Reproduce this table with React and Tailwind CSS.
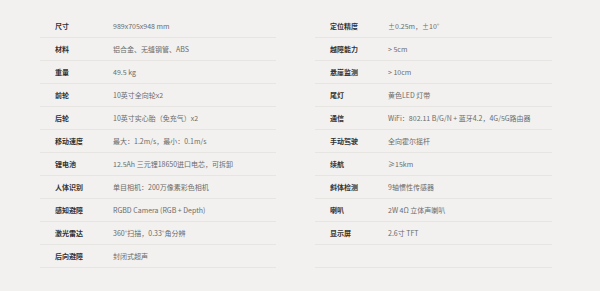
const LEFT = [
  ['尺寸', '989x705x948 mm'],
  ['材料', '铝合金、无缝钢管、ABS'],
  ['重量', '49.5 kg'],
  ['前轮', '10英寸全向轮x2'],
  ['后轮', '10英寸实心胎（免充气）x2'],
  ['移动速度', '最大：1.2m/s，最小：0.1m/s'],
  ['锂电池', '12.5Ah 三元锂18650进口电芯，可拆卸'],
  ['人体识别', '单目相机：200万像素彩色相机'],
  ['感知避障', 'RGBD Camera (RGB + Depth)'],
  ['激光雷达', '360°扫描，0.33°角分辨'],
  ['后向避障', '封闭式超声'],
];

const RIGHT = [
  ['定位精度', '±0.25m，±10°'],
  ['越障能力', '> 5cm'],
  ['悬崖监测', '> 10cm'],
  ['尾灯', '黄色LED 灯带'],
  ['通信', 'WiFi：802.11 B/G/N + 蓝牙4.2，4G/5G路由器'],
  ['手动驾驶', '全向霍尔摇杆'],
  ['续航', '≥15km'],
  ['斜体检测', '9轴惯性传感器'],
  ['喇叭', '2W 4Ω 立体声喇叭'],
  ['显示屏', '2.6寸 TFT'],
  ['', ''],
];

const SpecTable = ({ rows, width }) => (
  <div className={width}>
    {rows.map(([label, value], i) => (
      <div key={i} className="flex items-center h-[23px] border-b border-[#e6e5e2] pl-[15px]">
        <span className="w-[58px] shrink-0 text-[7px] font-bold text-[#333]">{label}</span>
        <span className="text-[7px] text-[#6b6b6b] whitespace-nowrap">{value}</span>
      </div>
    ))}
  </div>
);

export default function App() {
  return (
    <div
      className="w-[600px] h-[291px] bg-[#f2f1ef] pt-[15px] pl-[40px] flex gap-[39px]"
      style={{ fontFamily: '"Noto Sans CJK SC", "Noto Sans", sans-serif' }}
    >
      <SpecTable rows={LEFT} width="w-[236px]" />
      <SpecTable rows={RIGHT} width="w-[237px]" />
    </div>
  );
}
